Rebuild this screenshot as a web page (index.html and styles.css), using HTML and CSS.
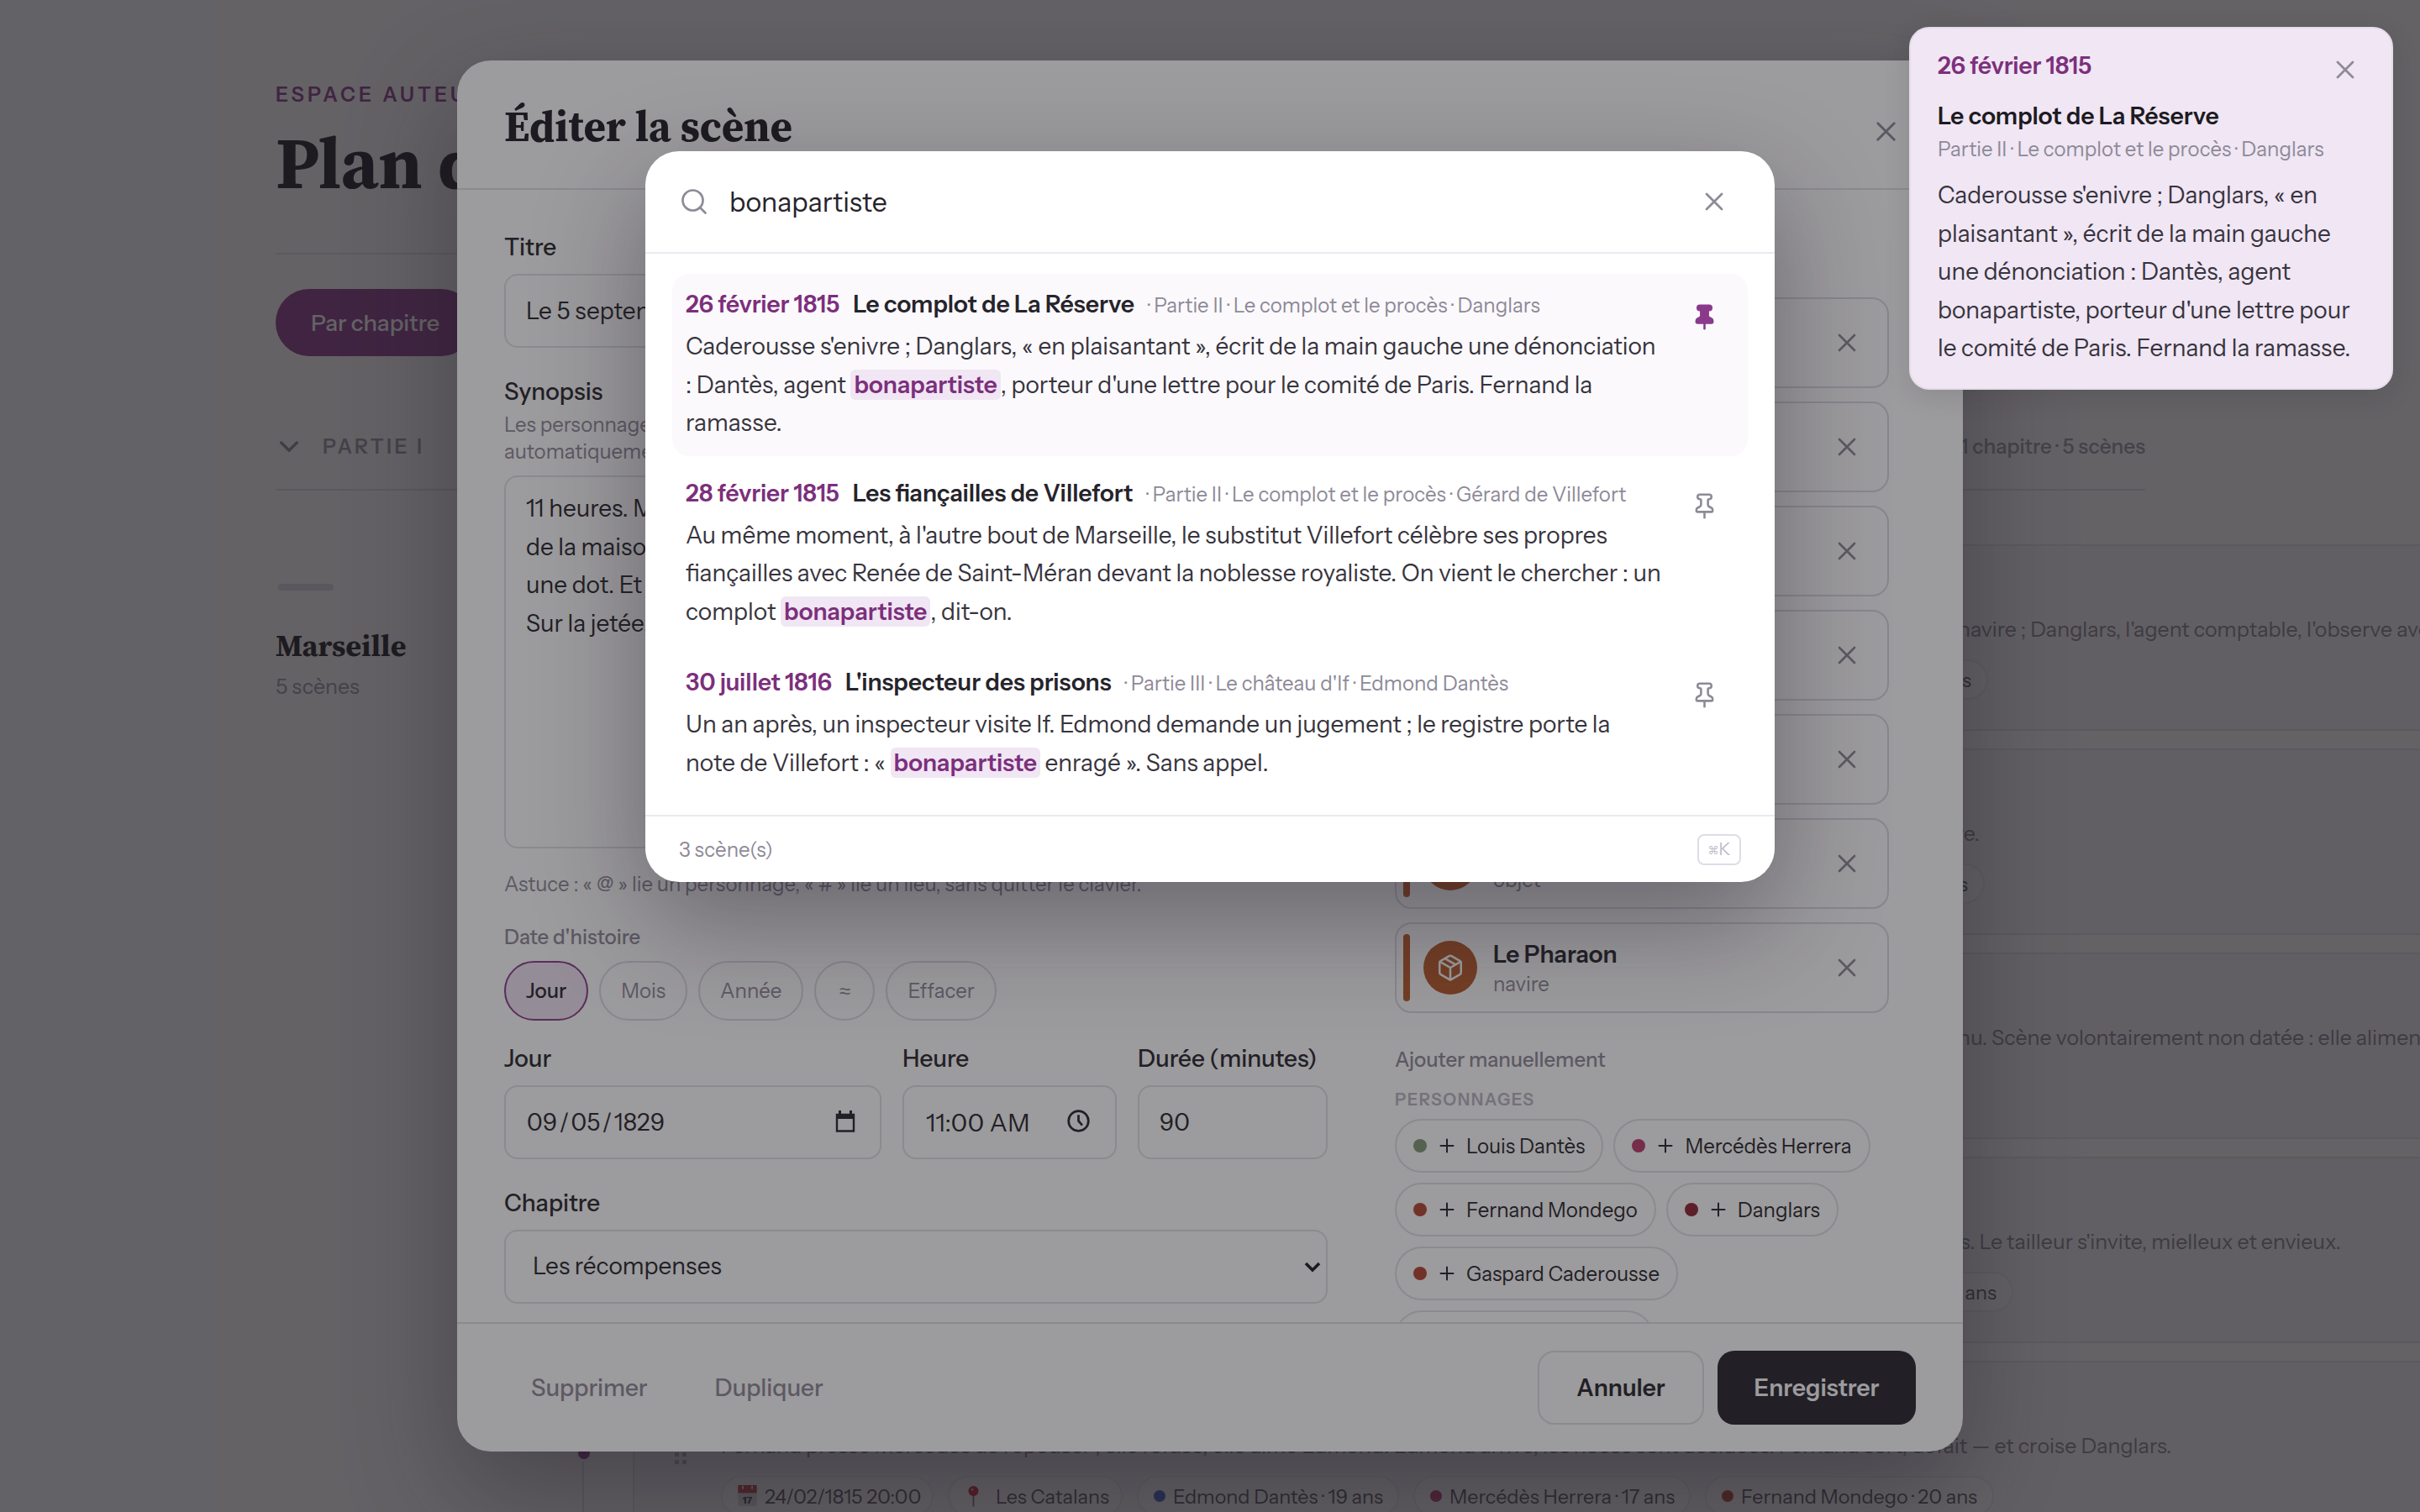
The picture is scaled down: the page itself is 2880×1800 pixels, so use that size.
FILE: index.html
```html
<!DOCTYPE html>
<html lang="fr">
<head>
    <meta charset="UTF-8">
    <meta name="viewport" content="width=device-width, initial-scale=1.0">
    <title>Plan du récit</title>
    <link rel="stylesheet" href="styles.css">
</head>
<body>
    <!-- icons -->
    <svg class="sprite">
        <symbol id="i-close" viewBox="0 0 24 24"><path d="M18 6 6 18M6 6l12 12"/></symbol>
        <symbol id="i-search" viewBox="0 0 24 24"><circle cx="11" cy="11" r="8"/><path d="m21 21-4.35-4.35"/></symbol>
        <symbol id="i-pin" viewBox="0 0 24 24"><path d="M12 17v5" fill="none"/><path d="M9 10.76a2 2 0 0 1-1.11 1.79l-1.78.9A2 2 0 0 0 5 15.24V16a1 1 0 0 0 1 1h12a1 1 0 0 0 1-1v-.76a2 2 0 0 0-1.11-1.79l-1.78-.9A2 2 0 0 1 15 10.76V7a1 1 0 0 1 1-1 2 2 0 0 0 0-4H8a2 2 0 0 0 0 4 1 1 0 0 1 1 1z"/></symbol>
        <symbol id="i-box" viewBox="0 0 24 24"><path d="M21 16V8a2 2 0 0 0-1-1.73l-7-4a2 2 0 0 0-2 0l-7 4A2 2 0 0 0 3 8v8a2 2 0 0 0 1 1.73l7 4a2 2 0 0 0 2 0l7-4A2 2 0 0 0 21 16z"/><path d="M3.3 7 12 12l8.7-5M12 22V12M7.5 4.27l9 5.15"/></symbol>
        <symbol id="i-plus" viewBox="0 0 24 24"><path d="M12 3v18M3 12h18"/></symbol>
        <symbol id="i-chevron" viewBox="0 0 24 24"><path d="m5 9 7 7 7-7"/></symbol>
    </svg>

    <div class="page">
        <header class="page-header">
            <div class="eyebrow">ESPACE AUTEUR</div>
            <h1>Plan du récit</h1>
        </header>
        <div class="tabs">
            <button class="tab">Par chapitre</button>
        </div>
        <div class="part">
            <svg class="icon part-chevron"><use href="#i-chevron"/></svg>
            <span class="part-name">PARTIE I</span>
            <span class="part-count">1 chapitre · 5 scènes</span>
        </div>
        <div class="chapter">
            <aside>
                <div class="chapter-bar"></div>
                <h2>Marseille</h2>
                <div class="chapter-count">5 scènes</div>
            </aside>
            <div class="timeline">
                <article class="scene">
                    <p><span class="lead">Le Pharaon entre au port. Edmond Dantès ramène le n</span>avire ; Danglars, l'agent comptable, l'observe avec envie.</p>
                    <div class="tags t1"><span class="tag">Danglars</span></div>
                </article>
                <article class="scene">
                    <p class="p2">Edmond retrouve son père, affaibli par la misère.</p>
                    <div class="tags t2"><span class="tag">Louis Dantès · 60 ans</span></div>
                </article>
                <article class="scene">
                    <p><span class="lead">Un homme observe la rade, inconn</span>u. Scène volontairement non datée : elle alimente le plan.</p>
                </article>
                <article class="scene">
                    <p class="p4">Edmond rend visite à Louis. Le tailleur s'invite, mielleux et envieux.</p>
                    <div class="tags t4"><span class="tag">Gaspard Caderousse · 26 ans</span></div>
                </article>
                <article class="scene">
                    <i class="dot"></i>
                    <div class="grip"><i></i><i></i><i></i><i></i><i></i><i></i></div>
                    <p>Fernand presse Mercédès de l'épouser ; elle refuse, elle aime Edmond. Edmond arrive, les noces sont décidées. Fernand sort, défait — et croise Danglars.</p>
                    <div class="tags">
                        <span class="tag w1"><svg class="cal" viewBox="0 0 24 28"><rect y="1" width="24" height="26" rx="2" fill="#ddd8dc"/><rect width="24" height="10" fill="#c23b45"/><path d="M6 1v4M18 1v4" stroke="#eee" stroke-width="2"/><text x="12" y="24" text-anchor="middle">17</text></svg>24/02/1815 20:00</span>
                        <span class="tag w2"><svg class="pushpin" viewBox="0 0 14 28"><path d="M7 12v15" stroke="#777" stroke-width="2"/><circle cx="7" cy="7" r="6.5" fill="#d32032"/><circle cx="5.5" cy="5" r="1.6" fill="#f0a0a8"/></svg>Les Catalans</span>
                        <span class="tag w3"><i class="c blue"></i>Edmond Dantès · 19 ans</span>
                        <span class="tag w4"><i class="c pink"></i>Mercédès Herrera · 17 ans</span>
                        <span class="tag w5"><i class="c red"></i>Fernand Mondego · 20 ans</span>
                    </div>
                </article>
            </div>
        </div>
    </div>

    <div class="overlay">
        <div class="modal">
            <div class="modal-header">
                <h3>Éditer la scène</h3>
                <svg class="icon x-large"><use href="#i-close"/></svg>
            </div>
            <div class="modal-body">
                <div class="form">
                    <label>Titre</label>
                    <div class="field">Le 5 septembre</div>
                    <label class="mt">Synopsis</label>
                    <div class="help">Les personnages et lieux cités sont liés<br>automatiquement à la scène.</div>
                    <div class="textarea">11 heures. Morrel attend la ruine<br>de la maison. Julie reçoit<br>une dot. Et le Pharaon entre.<br>Sur la jetée, un inconnu.</div>
                    <div class="hint">Astuce : « @ » lie un personnage, « # » lie un lieu, sans quitter le clavier.</div>
                    <div class="subtitle">Date d'histoire</div>
                    <div class="pills">
                        <span class="pill active">Jour</span>
                        <span class="pill">Mois</span>
                        <span class="pill">Année</span>
                        <span class="pill">≈</span>
                        <span class="pill">Effacer</span>
                    </div>
                    <div class="row">
                        <div><label>Jour</label><div class="field"><span class="date">09<b>/</b>05<b>/</b>1829</span>
                            <svg class="cal-icon" viewBox="0 0 24 26"><path d="M2 5h20v19.500H2z" fill="none" stroke="currentColor" stroke-width="2.400"/><path d="M1 4h22v6H1zM4 0h3v5H4zM17 0h3v5h-3z" fill="currentColor"/></svg></div></div>
                        <div><label>Heure</label><div class="field"><span class="time">11:00 AM</span>
                            <svg class="clock-icon" viewBox="0 0 24 24"><circle cx="12" cy="12" r="10.500"/><path d="M12 5.500V12l4 4.500"/></svg></div></div>
                        <div><label>Durée (minutes)</label><div class="field">90</div></div>
                    </div>
                    <label class="mt">Chapitre</label>
                    <div class="field select">Les récompenses
                        <svg viewBox="0 0 20 14"><path d="m2 3 8 8 8-8"/></svg></div>
                </div>
                <div class="linked">
                    <div class="card"><svg class="icon x"><use href="#i-close"/></svg></div>
                    <div class="card"><svg class="icon x"><use href="#i-close"/></svg></div>
                    <div class="card"><svg class="icon x"><use href="#i-close"/></svg></div>
                    <div class="card"><svg class="icon x"><use href="#i-close"/></svg></div>
                    <div class="card"><svg class="icon x"><use href="#i-close"/></svg></div>
                    <div class="card">
                        <i class="stripe"></i>
                        <span class="avatar"><svg class="icon"><use href="#i-box"/></svg></span>
                        <div class="card-text"><strong>La bourse</strong><small>objet</small></div>
                        <svg class="icon x"><use href="#i-close"/></svg>
                    </div>
                    <div class="card">
                        <i class="stripe"></i>
                        <span class="avatar"><svg class="icon"><use href="#i-box"/></svg></span>
                        <div class="card-text"><strong>Le Pharaon</strong><small>navire</small></div>
                        <svg class="icon x"><use href="#i-close"/></svg>
                    </div>
                    <div class="add-title">Ajouter manuellement</div>
                    <div class="add-group">PERSONNAGES</div>
                    <div class="chips">
                        <span class="chip"><i class="c green"></i><svg class="icon"><use href="#i-plus"/></svg>Louis Dantès</span>
                        <span class="chip"><i class="c pink"></i><svg class="icon"><use href="#i-plus"/></svg>Mercédès Herrera</span>
                        <span class="chip"><i class="c red"></i><svg class="icon"><use href="#i-plus"/></svg>Fernand Mondego</span>
                        <span class="chip"><i class="c wine"></i><svg class="icon"><use href="#i-plus"/></svg>Danglars</span>
                        <span class="chip"><i class="c red"></i><svg class="icon"><use href="#i-plus"/></svg>Gaspard Caderousse</span>
                        <span class="chip empty"></span>
                    </div>
                </div>
            </div>
            <div class="modal-footer">
                <span class="ghost">Supprimer</span>
                <span class="ghost">Dupliquer</span>
                <button class="btn">Annuler</button>
                <button class="btn dark">Enregistrer</button>
            </div>
        </div>
    </div>

    <div class="overlay top">
        <div class="palette">
            <div class="palette-header">
                <svg class="icon search"><use href="#i-search"/></svg>
                <span class="query">bonapartiste</span>
                <svg class="icon x"><use href="#i-close"/></svg>
            </div>
            <div class="results">
                <div class="result selected">
                    <div class="result-main">
                        <div class="result-title"><b class="when">26 février 1815</b><b>Le complot de La Réserve</b><span>· Partie II · Le complot et le procès · Danglars</span></div>
                        <p>Caderousse s'enivre ; Danglars, « en plaisantant », écrit de la main gauche une dénonciation<br>: Dantès, agent <mark>bonapartiste</mark>, porteur d'une lettre pour le comité de Paris. Fernand la<br>ramasse.</p>
                    </div>
                    <svg class="icon pin pinned"><use href="#i-pin"/></svg>
                </div>
                <div class="result">
                    <div class="result-main">
                        <div class="result-title"><b class="when">28 février 1815</b><b>Les fiançailles de Villefort</b><span>· Partie II · Le complot et le procès · Gérard de Villefort</span></div>
                        <p>Au même moment, à l'autre bout de Marseille, le substitut Villefort célèbre ses propres<br>fiançailles avec Renée de Saint-Méran devant la noblesse royaliste. On vient le chercher : un<br>complot <mark>bonapartiste</mark>, dit-on.</p>
                    </div>
                    <svg class="icon pin"><use href="#i-pin"/></svg>
                </div>
                <div class="result">
                    <div class="result-main">
                        <div class="result-title"><b class="when">30 juillet 1816</b><b>L'inspecteur des prisons</b><span>· Partie III · Le château d'If · Edmond Dantès</span></div>
                        <p>Un an après, un inspecteur visite If. Edmond demande un jugement ; le registre porte la<br>note de Villefort : « <mark>bonapartiste</mark> enragé ». Sans appel.</p>
                    </div>
                    <svg class="icon pin"><use href="#i-pin"/></svg>
                </div>
            </div>
            <div class="palette-footer">
                <span>3 scène(s)</span>
                <kbd><span class="cmd">⌘</span>K</kbd>
            </div>
        </div>
    </div>

    <div class="pinned-note">
        <div class="note-head"><b class="when">26 février 1815</b><svg class="icon x"><use href="#i-close"/></svg></div>
        <b class="note-title">Le complot de La Réserve</b>
        <div class="note-meta">Partie II · Le complot et le procès · Danglars</div>
        <p>Caderousse s'enivre ; Danglars, « en<br>plaisantant », écrit de la main gauche<br>une dénonciation : Dantès, agent<br>bonapartiste, porteur d'une lettre pour<br>le comité de Paris. Fernand la ramasse.</p>
    </div>
</body>
</html>
```
FILE: styles.css
```css
* {
    box-sizing: border-box;
}
html, body {
    margin: 0;
    padding: 0;
    width: 2880px;
    height: 1800px;
    overflow: hidden;
}
body {
    font-family: "Instrument Sans", "Liberation Sans", Inter, sans-serif;
    font-size: 28px;
    color: #26242b;
    background-color: #fdfcfe;
    white-space: nowrap;
}
h1, h2, h3, p {
    margin: 0;
}
h1, h2, h3 {
    font-family: "Source Serif 4", "Noto Serif", "DejaVu Serif Condensed", serif;
    font-weight: 700;
    color: #1d1b22;
}
button {
    font: inherit;
    border: 0;
}
.sprite {
    position: absolute;
    width: 0;
    height: 0;
}
.icon {
    width: 36px;
    height: 36px;
    fill: none;
    stroke: #8e8a98;
    stroke-width: 1.8;
    stroke-linecap: round;
    stroke-linejoin: round;
    flex: none;
}
.x {
    width: 36px;
    height: 36px;
}
.when {
    color: #7c2f7c;
}

/* page behind the dialogs */
.page {
    width: 2880px;
    height: 1800px;
    overflow: hidden;
    padding: 97px 0 0 328px;
}
.page-header {
    width: 2225px;
    padding-bottom: 55px;
    border-bottom: 2px solid #e4e2e8;
}
.eyebrow {
    font-size: 24px;
    line-height: 32px;
    font-weight: 600;
    letter-spacing: 4.200px;
    color: #8b3a8b;
}
h1 {
    font-size: 85px;
    line-height: 104px;
    margin-top: 13px;
}
.tabs {
    margin-top: 41px;
    display: flex;
}
.tab {
    height: 80px;
    padding: 0 42px;
    border-radius: 40px;
    background-color: #8b3a8b;
    color: #fff;
    font-size: 27.200px;
    font-weight: 500;
}
.part {
    width: 2225px;
    height: 104px;
    margin-top: 56px;
    border-bottom: 2px solid #e0dee6;
    display: flex;
    align-items: center;
    color: #9a96a3;
    font-weight: 600;
}
.part-chevron {
    width: 32px;
    height: 32px;
    stroke-width: 2.600;
    margin-right: 24px;
}
.part-name {
    font-size: 24px;
    letter-spacing: 3.400px;
}
.part-count {
    margin-left: auto;
    font-size: 24.400px;
    font-weight: 500;
}
.chapter {
    display: flex;
}
.chapter aside {
    width: 365px;
    flex: none;
    padding-top: 111px;
}
.chapter-bar {
    width: 66px;
    height: 8px;
    margin-left: 3px;
    border-radius: 4px;
    background-color: #dfdce6;
}
h2 {
    font-size: 36px;
    line-height: 44px;
    margin-top: 44px;
}
.chapter-count {
    font-size: 25px;
    line-height: 32px;
    margin-top: 10px;
    color: #9a96a3;
}
.timeline {
    flex: none;
    padding: 64px 0 0 58px;
    border-left: 2px solid #dfdce6;
}
.scene {
    position: relative;
    width: 2200px;
    height: 222px;
    margin-bottom: 21px;
    padding: 79px 0 0 103px;
    border: 2px solid #e4e1e9;
    border-radius: 24px;
    background-color: #f7f4f9;
}
.scene p {
    font-size: 25px;
    line-height: 40px;
    color: #86828f;
    display: flex;
}
.lead {
    width: 1487px;
    flex: none;
    text-align: right;
}
.scene .p2 {
    width: 1498px;
    justify-content: flex-end;
}
.scene .p4 {
    width: 1928px;
    justify-content: flex-end;
}
.tags {
    display: flex;
    margin-top: 16px;
}
.t1 {
    width: 1508px;
    justify-content: flex-end;
}
.t2 {
    width: 1504px;
    justify-content: flex-end;
}
.t4 {
    width: 1538px;
    justify-content: flex-end;
}
.tag {
    height: 48px;
    padding: 0 18px;
    margin-right: 17px;
    border: 2px solid #e9e6ee;
    border-radius: 24px;
    background-color: #fdfcfe;
    font-size: 23.400px;
    color: #55515d;
    display: flex;
    align-items: center;
}
.t1 .tag, .t2 .tag, .t4 .tag {
    margin-right: 0;
}
.w1 {
    width: 253px;
}
.w2 {
    width: 208px;
}
.w3 {
    width: 312px;
}
.w4 {
    width: 330px;
}
.c {
    width: 16px;
    height: 16px;
    border-radius: 50%;
    flex: none;
}
.tag .c {
    width: 14px;
    height: 14px;
    margin-right: 9px;
}
.blue {
    background-color: #3b62c4;
}
.pink {
    background-color: #bd3a6c;
}
.red {
    background-color: #b5452f;
}
.wine {
    background-color: #8f2433;
}
.green {
    background-color: #7f9a75;
}
.cal {
    flex: none;
    width: 23px;
    height: 26px;
    margin-right: 9px;
}
.cal text {
    font-size: 13px;
    font-weight: 700;
    fill: #333;
}
.pushpin {
    flex: none;
    width: 13px;
    height: 27px;
    margin: 0 20px 0 4px;
}
.dot {
    position: absolute;
    left: -70px;
    top: 98px;
    width: 20px;
    height: 20px;
    border: 3px solid #fdfcfe;
    border-radius: 50%;
    background-color: #8b3a8b;
}
.grip {
    position: absolute;
    left: 48px;
    top: 98px;
    display: grid;
    grid-template-columns: 5px 5px;
    gap: 4px;
}
.grip i {
    height: 5px;
    background-color: #b4b0bd;
}

/* scene editor */
.overlay {
    position: absolute;
    inset: 0;
    background-color: rgba(29, 28, 32, .44);
    padding-top: 72px;
}
.modal {
    width: 1792px;
    height: 1656px;
    margin: 0 auto;
    border-radius: 40px;
    background-color: #fff;
    box-shadow: 0 48px 128px rgba(30, 24, 40, .4);
    display: flex;
    flex-direction: column;
}
.modal-header {
    height: 154px;
    padding: 4px 72px 0 56px;
    border-bottom: 2px solid #e1e0e6;
    display: flex;
    align-items: center;
    justify-content: space-between;
}
h3 {
    font-size: 51px;
}
.x-large {
    width: 39px;
    height: 39px;
    margin-top: 12px;
}
.modal-body {
    flex: 1;
    min-height: 0;
    overflow: hidden;
    padding-left: 56px;
    display: flex;
    gap: 80px;
}
.form {
    width: 980px;
    padding-top: 50px;
}
label {
    display: block;
    line-height: 36px;
    margin-bottom: 14px;
    font-weight: 500;
}
.mt {
    margin-top: 34px;
}
.field {
    height: 88px;
    padding: 0 24px;
    border: 2px solid #e1e0e6;
    border-radius: 16px;
    display: flex;
    align-items: center;
    justify-content: space-between;
}
.help {
    margin-top: -8px;
    font-size: 24px;
    line-height: 32px;
    color: #8e8a98;
}
.textarea {
    height: 444px;
    margin-top: 12px;
    padding: 15px 24px;
    border: 2px solid #e1e0e6;
    border-radius: 16px;
    line-height: 45.500px;
}
.hint {
    margin-top: 25px;
    font-size: 24px;
    line-height: 36px;
    color: #8e8a98;
}
.subtitle {
    margin-top: 27px;
    font-size: 24px;
    line-height: 36px;
    font-weight: 500;
    color: #8e8a98;
}
.pills {
    display: flex;
    gap: 13px;
    margin-top: 10px;
}
.pill {
    height: 71px;
    min-width: 72px;
    padding: 0 24px;
    border: 2px solid #dddae4;
    border-radius: 36px;
    font-size: 24px;
    line-height: 67px;
    text-align: center;
    color: #8e8a98;
}
.pill.active {
    border-color: #8b3a8b;
    background-color: #f0e6f4;
    color: #26242b;
    font-weight: 500;
}
.row {
    display: grid;
    grid-template-columns: 449px 255px 226px;
    gap: 25px;
    margin-top: 27px;
}
.date {
    padding-left: 1px;
}
.date b {
    font-weight: 400;
    padding: 0 2px;
}
.time {
    font-size: 29px;
    padding-left: 2px;
    letter-spacing: .4px;
}
.cal-icon {
    width: 24px;
    height: 26px;
    margin: -3px 5px 0 0;
}
.clock-icon {
    width: 27px;
    height: 27px;
    margin: -4px 6px 0 0;
    fill: none;
    stroke: #26242b;
    stroke-width: 2.400;
}
.select {
    padding: 0 6px 2px 32px;
}
.select svg {
    width: 20px;
    height: 14px;
    margin-top: 2px;
    fill: none;
    stroke: #1d1b22;
    stroke-width: 3.600;
}

/* linked elements */
.linked {
    width: 588px;
    padding-top: 128px;
}
.card {
    height: 108px;
    margin-bottom: 16px;
    padding: 12px 30px 12px 8px;
    border: 2px solid #dcdae4;
    border-radius: 20px;
    display: flex;
    align-items: center;
}
.card .x {
    margin-left: auto;
}
.stripe {
    width: 8px;
    height: 80px;
    border-radius: 4px;
    background-color: #b85a28;
}
.avatar {
    width: 64px;
    height: 64px;
    margin: 0 19px 0 16px;
    border-radius: 50%;
    background-color: #b85a28;
    display: flex;
    align-items: center;
    justify-content: center;
}
.avatar .icon {
    width: 34px;
    height: 34px;
    stroke: #fff;
}
.card-text {
    line-height: 36px;
    padding-top: 3px;
}
.card-text strong, .card-text small {
    display: block;
    font-weight: 600;
}
.card-text small {
    font-size: 24px;
    font-weight: 400;
    color: #8e8a98;
}
.add-title {
    margin-top: 38px;
    font-size: 24px;
    line-height: 36px;
    font-weight: 500;
    color: #8e8a98;
}
.add-group {
    margin-top: 14px;
    font-size: 20px;
    line-height: 30px;
    font-weight: 600;
    letter-spacing: 1.500px;
    color: #b8b4c2;
}
.chips {
    display: flex;
    flex-wrap: wrap;
    gap: 12px;
    margin-top: 8px;
}
.chip {
    height: 64px;
    padding: 0 20px;
    border: 2px solid #e1e0e6;
    border-radius: 32px;
    font-size: 24px;
    display: flex;
    align-items: center;
}
.chip .icon {
    width: 20px;
    height: 20px;
    margin: 0 13px 0 14px;
    stroke: #26242b;
    stroke-width: 2.400;
}
.empty {
    width: 308px;
}
.modal-footer {
    height: 154px;
    padding: 0 56px 0 88px;
    border-top: 2px solid #e1e0e6;
    display: flex;
    align-items: center;
    gap: 80px;
}
.ghost {
    color: #8e8a98;
    font-weight: 500;
}
.btn {
    width: 198px;
    height: 88px;
    margin-left: auto;
    border: 2px solid #e1e0e6;
    border-radius: 20px;
    background-color: #fff;
    color: #26242b;
    font-weight: 600;
}
.btn.dark {
    width: 236px;
    margin-left: -64px;
    border: 0;
    background-color: #26222c;
    color: #fff;
}

/* search palette */
.overlay.top {
    padding-top: 180px;
}
.palette {
    width: 1344px;
    height: 870px;
    margin: 0 auto;
    border-radius: 40px;
    background-color: #fff;
    box-shadow: 0 48px 128px rgba(30, 24, 40, .4);
}
.palette-header {
    height: 122px;
    padding: 0 54px 0 40px;
    border-bottom: 2px solid #ebe9ef;
    display: flex;
    align-items: center;
}
.query {
    flex: 1;
    margin-left: 24px;
    font-size: 32px;
}
.results {
    height: 668px;
    padding: 24px 32px;
}
.result {
    margin-bottom: 8px;
    padding: 16px;
    border-radius: 20px;
    display: flex;
}
.result:last-child {
    margin-top: 9px;
}
.selected {
    background-color: #fbf9fc;
}
.result-main {
    flex: 1;
}
.result-title {
    height: 48px;
    line-height: 41px;
    display: flex;
    gap: 16px;
}
.result b, .pinned-note b {
    font-weight: 600;
}
.result-title span {
    font-size: 24px;
    line-height: 43px;
    color: #8e8a98;
}
.result p, .pinned-note p {
    line-height: 45.500px;
    color: #37343d;
}
mark {
    padding: 1px 4px;
    border-radius: 6px;
    background-color: #f0e6f4;
    color: #7c2f7c;
    font-weight: 600;
}
.pin {
    width: 33px;
    height: 33px;
    margin: 19px 19px 0 0;
    stroke-width: 1.9;
}
.pinned {
    fill: #8b3a8b;
    stroke: #8b3a8b;
}
.palette-footer {
    height: 80px;
    padding: 0 40px;
    border-top: 2px solid #ebe9ef;
    display: flex;
    align-items: center;
    justify-content: space-between;
    font-size: 24px;
    color: #8e8a98;
}
kbd {
    width: 52px;
    height: 37px;
    border: 2px solid #dfdce8;
    border-radius: 8px;
    font-family: inherit;
    font-size: 20px;
    line-height: 33px;
    text-align: center;
    color: #bfbaca;
}
.cmd {
    font-size: 13px;
    vertical-align: 1px;
}

/* pinned scene */
.pinned-note {
    position: absolute;
    top: 32px;
    right: 32px;
    width: 576px;
    height: 432px;
    padding: 20px 32px;
    border: 2px solid #e3dde8;
    border-radius: 24px;
    background-color: #f0e6f4;
    box-shadow: 0 8px 32px rgba(30, 24, 40, .12);
}
.note-head {
    display: flex;
    align-items: center;
    justify-content: space-between;
    height: 48px;
}
.note-head .x {
    margin: 10px 5px 0 0;
}
.note-title {
    display: block;
    margin-top: 16px;
    line-height: 40px;
    color: #1d1b22;
}
.note-meta {
    margin-top: 3px;
    font-size: 24px;
    line-height: 34px;
    color: #8e8a98;
}
.pinned-note p {
    margin-top: 15px;
}
```
